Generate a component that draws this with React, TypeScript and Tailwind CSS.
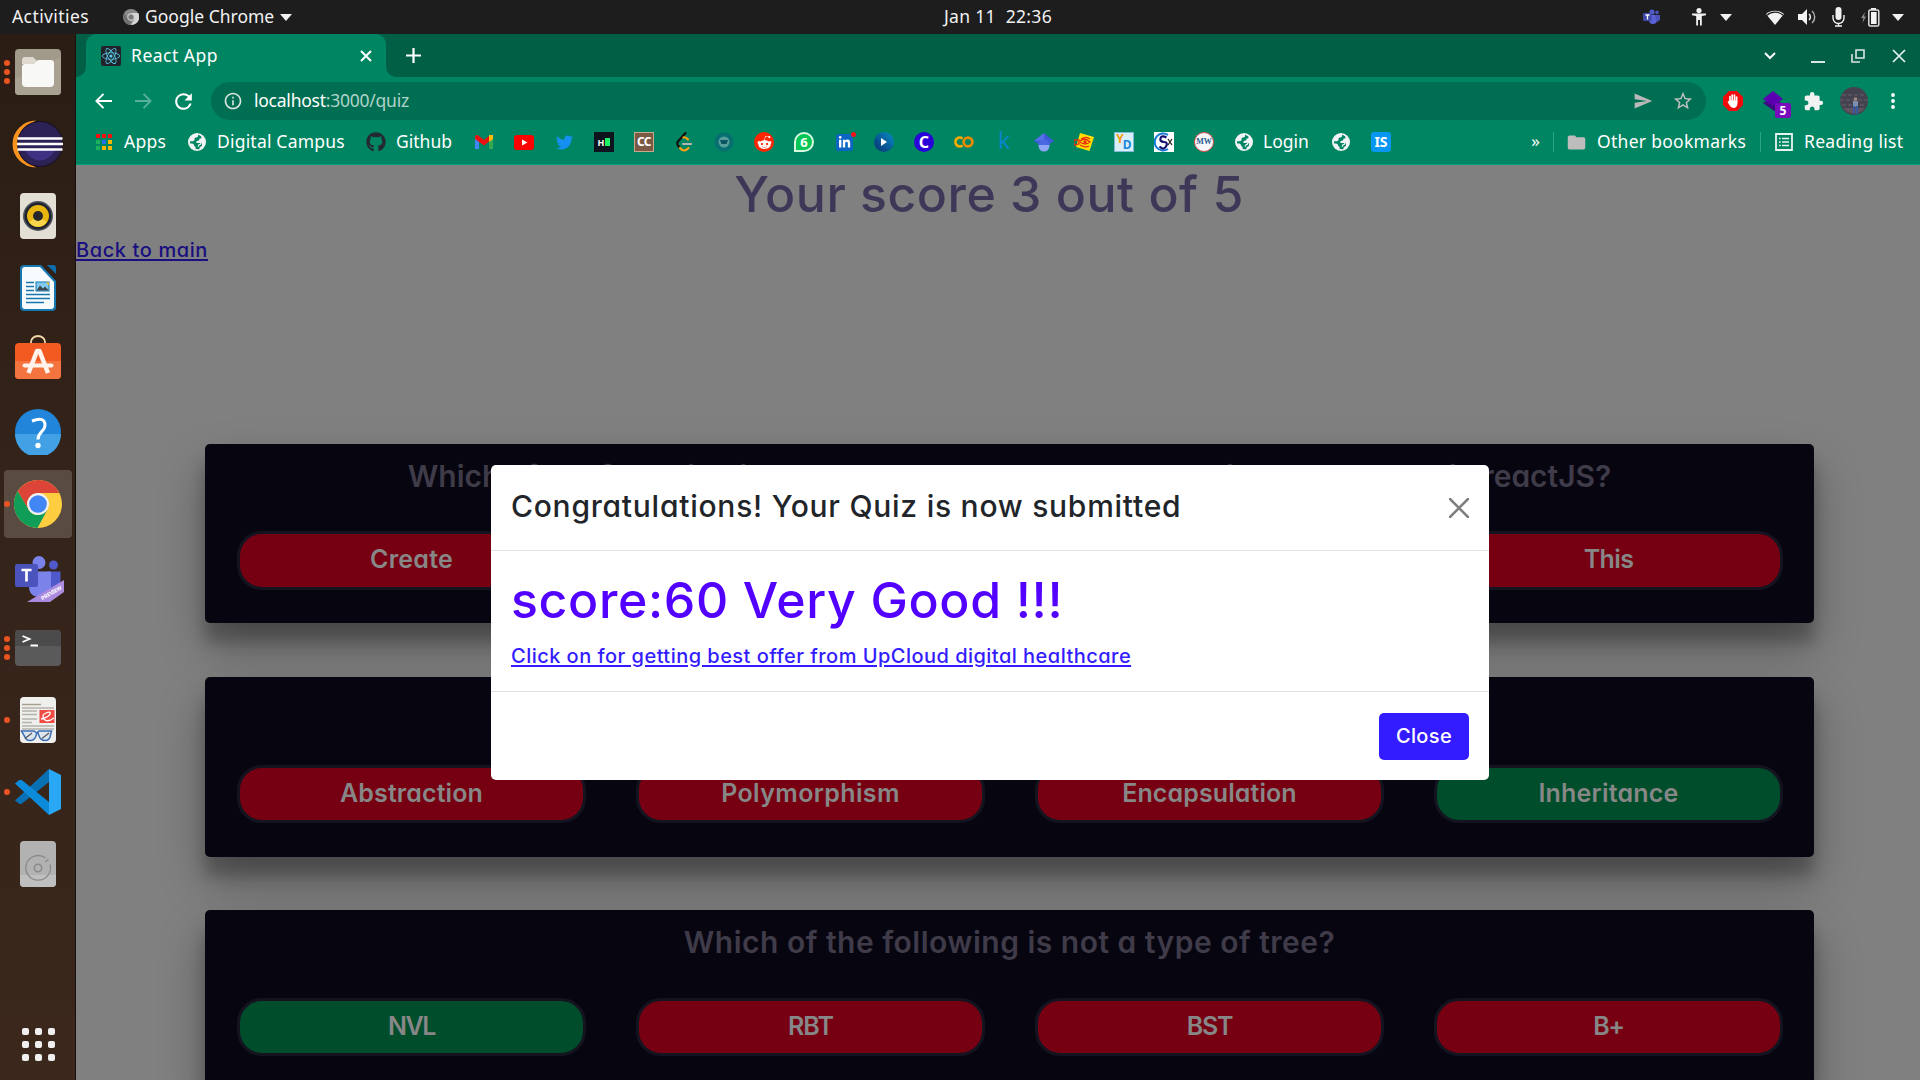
import { FaGithub, FaTwitter, FaRedditAlien, FaReact, FaLinkedinIn } from "react-icons/fa";
import { MdExtension, MdSend, MdStarBorder, MdInfoOutline, MdFolder, MdRefresh } from "react-icons/md";

const ui = "font-['Noto_Sans',sans-serif] whitespace-pre";

/* ---------- Desktop top bar ---------- */

function Caret() {
  return <svg width="12" height="7" viewBox="0 0 12 7"><path d="M0 0h12L6 7z" fill="#f2f2f2" /></svg>;
}

function TeamsTray() {
  return (
    <svg width="17" height="16" viewBox="0 0 17 16">
      <circle cx="9" cy="3" r="2.6" fill="#5059c9" />
      <circle cx="14" cy="3.4" r="1.8" fill="#4b53bc" />
      <path d="M6 6h8v5a4 4 0 0 1-8 0z" fill="#5b62d6" />
      <path d="M12 6h5v4a3 3 0 0 1-4 2.500z" fill="#4b53bc" />
      <rect x="0" y="4" width="8.500" height="8" rx="1" fill="#4048a8" />
      <path d="M2.500 6h4M4.500 6v4.500" stroke="#fff" strokeWidth="1.300" />
    </svg>
  );
}

function TopBar() {
  return (
    <header className={`${ui} relative flex h-[34px] shrink-0 items-center bg-[#1d1d1d] text-[17.5px] leading-none text-[#f2f2f2]`}>
      <span className="ml-[12px] tracking-[0.41px]">Activities</span>
      <svg className="ml-[34px]" width="16" height="16" viewBox="0 0 16 16">
        <circle cx="8" cy="8" r="8" fill="#8a8a8a" />
        <path d="M8 4h7.200A8 8 0 0 1 8 16l3.500-6z" fill="#d5d5d5" />
        <path d="M1.500 4 5 10l3 2-1 4A8 8 0 0 1 1.500 4z" fill="#707070" />
        <circle cx="8" cy="8" r="3.700" fill="#ccc" />
        <circle cx="8" cy="8" r="2.600" fill="#777" />
      </svg>
      <span className="ml-[6px]">Google Chrome</span>
      <span className="ml-[6px]"><Caret /></span>
      <span className="absolute left-[944px] tracking-[0.32px]">Jan 11  22:36</span>
      <div className="ml-auto flex items-center pr-[16px]">
        <TeamsTray />
        <svg className="ml-[31px]" width="16" height="18" viewBox="0 0 16 18" fill="#f2f2f2">
          <circle cx="8" cy="2.600" r="2.600" />
          <path d="M1 5.500h14v1.800l-4.200.700V17.500H9V12H7v5.500H5.200V8L1 7.300z" />
        </svg>
        <span className="ml-[13px]"><Caret /></span>
        <svg className="ml-[33px]" width="20" height="17" viewBox="0 0 20 17">
          <path d="M1 5a14 14 0 0 1 18 0L10 16z" fill="#f2f2f2" />
          <path d="M2 6.200a12 12 0 0 1 16 0" stroke="#1d1d1d" strokeWidth="1.200" fill="none" />
        </svg>
        <svg className="ml-[13px]" width="19" height="18" viewBox="0 0 19 18" fill="none">
          <path d="M0 6h4l5-5v16l-5-5H0z" fill="#f2f2f2" />
          <path d="M11 6a4 4 0 0 1 0 6" stroke="#f2f2f2" strokeWidth="1.500" />
          <path d="M14 3a8 8 0 0 1 0 12" stroke="#aaa" strokeWidth="1.500" />
        </svg>
        <svg className="ml-[15px]" width="13" height="20" viewBox="0 0 13 20" fill="none">
          <rect x="3.500" y="0" width="6" height="13" rx="3" fill="#f2f2f2" />
          <path d="M1 8v3a5.500 5.500 0 0 0 11 0V8M6.500 16v3M3 19h7" stroke="#f2f2f2" strokeWidth="1.400" />
        </svg>
        <svg className="ml-[16px]" width="19" height="19" viewBox="0 0 19 19" fill="none">
          <path d="M4 4 0 10h2.300L1.500 15 5 8.500H3z" fill="#8a8a8a" />
          <path d="M10 0h5v2h-5z" fill="#f2f2f2" />
          <rect x="7.800" y="2" width="10" height="16" rx="1.500" stroke="#ddd" strokeWidth="1.500" />
          <rect x="10" y="4" width="5.600" height="12" fill="#f2f2f2" />
        </svg>
        <span className="ml-[12px]"><Caret /></span>
      </div>
    </header>
  );
}

/* ---------- Dock ---------- */

const FilesIcon = () => (
  <svg width="46" height="46" viewBox="0 0 46 46">
    <rect width="46" height="46" rx="4" fill="#a1998a" />
    <path d="M0 30 46 8v34a4 4 0 0 1-4 4H4a4 4 0 0 1-4-4z" fill="#a9a293" />
    <path d="M7 11q0-3 3-3h8l4 4h14q2 0 2 3H7z" fill="#dedad0" />
    <path d="M7 18q0-3 3-3h9l4-4h13q3 0 3 3v20q0 4-4 4H11q-4 0-4-4z" fill="#f8f8f7" />
  </svg>
);

const EclipseIcon = () => (
  <svg width="52" height="48" viewBox="0 0 52 48">
    <path d="M25 .500a23.500 23.500 0 0 0 0 47A27 27 0 0 1 25 .500z" fill="#f7941e" />
    <circle cx="29" cy="24" r="23" fill="#191026" />
    <circle cx="29" cy="24" r="22" fill="#2c2255" />
    <path d="M14 30h30a16 16 0 0 1-30 0z" fill="#413182" />
    <path d="M6.500 18.500h45M6 24h46M6.500 29.500h45" stroke="#fff" strokeWidth="2.400" />
  </svg>
);

const RhythmboxIcon = () => (
  <svg width="36" height="46" viewBox="0 0 36 46">
    <rect width="36" height="46" rx="4" fill="#e3dfd5" />
    <circle cx="18" cy="23" r="15" fill="#50535c" />
    <circle cx="18" cy="23" r="13.500" fill="#1f2230" />
    <circle cx="18" cy="23" r="11" fill="#e9b50f" />
    <path d="M9 29a11 11 0 0 0 18 0l-9-6z" fill="#f8d54a" />
    <circle cx="18" cy="23" r="5" fill="#26262a" />
  </svg>
);

const WriterIcon = () => (
  <svg width="36" height="46" viewBox="0 0 36 46">
    <path d="M4 0h17l15 16v26a4 4 0 0 1-4 4H4a4 4 0 0 1-4-4V4a4 4 0 0 1 4-4z" fill="#1778b0" />
    <path d="M5 2h15l14 15v24q0 3-3 3H5q-3 0-3-3V5q0-3 3-3z" fill="#f7fbfd" />
    <path d="M27 0h6q3 0 3 3v6z" fill="#0e6cab" />
    <path d="M6 17.500h8M6 21.500h8M6 25.500h8M6 29.500h24M6 33.500h24M6 37.500h18" stroke="#1778b0" strokeWidth="1.500" />
    <rect x="16" y="17" width="13" height="9" fill="#83caf2" stroke="#1778b0" />
    <path d="m16.500 25.500 3.500-5 3 3 2-2 4 4z" fill="#3b4750" />
    <path d="M26 17.500h3v3z" fill="#f5c211" />
  </svg>
);

const SoftwareIcon = () => (
  <svg width="46" height="44" viewBox="0 0 46 44">
    <path d="M16 9V7a7 6 0 0 1 14 0v2" fill="none" stroke="#f0d6a6" strokeWidth="1.800" />
    <rect y="8" width="46" height="36" rx="4" fill="#f25a22" />
    <path d="M0 26h46v14a4 4 0 0 1-4 4H4a4 4 0 0 1-4-4z" fill="#f4743f" />
    <path d="M13.500 38 22 16h2.500L33 38" stroke="#fff3ec" strokeWidth="4.500" fill="none" strokeLinejoin="round" />
    <path d="M9.500 30.500h27" stroke="#fff3ec" strokeWidth="4" strokeLinecap="round" />
  </svg>
);

const HelpIcon = () => (
  <svg width="46" height="46" viewBox="0 0 46 46">
    <circle cx="23" cy="23" r="23" fill="#2186d9" />
    <path d="M0 25h46a23 23 0 0 1-46 0z" fill="#42a0e4" />
    <path d="M17 12q13-5 13 4.500c0 6-7 6-7 14" stroke="#fff" strokeWidth="3" fill="none" />
    <circle cx="23" cy="36.500" r="2.700" fill="#fff" />
  </svg>
);

const ChromeIcon = () => (
  <svg width="48" height="48" viewBox="0 0 48 48">
    <circle cx="24" cy="24" r="24" fill="#ffcd40" />
    <path d="M24 13h21.300A24 24 0 0 0 3.700 11.200L14.500 30z" fill="#db4437" />
    <path d="M3.700 11.200A24 24 0 0 0 23.500 48L33.500 29.500 24 35q-6 0-9.500-5.500z" fill="#0f9d58" />
    <circle cx="24" cy="24" r="11" fill="#f1f1f1" />
    <circle cx="24" cy="24" r="8.800" fill="#4285f4" />
  </svg>
);

const TeamsIcon = () => (
  <svg width="50" height="46" viewBox="0 0 50 46">
    <circle cx="24" cy="6.500" r="6.500" fill="#7b83eb" />
    <circle cx="38.500" cy="9" r="4.500" fill="#5059c9" />
    <path d="M32 15.500h13.500V30q0 8-8 8H32z" fill="#5059c9" />
    <path d="M14 15.500h22V30q0 11-11 11T14 30z" fill="#7b83eb" />
    <rect y="8" width="23" height="23" rx="2" fill="#4b53bc" />
    <path d="M6.500 14h10M11.500 14v11.500" stroke="#fff" strokeWidth="2.700" />
    <path d="M12 46 49 24v12L35 46z" fill="#ab8be0" />
    <text x="27.500" y="44.500" transform="rotate(-31 27.500 44.500)" fontSize="5.500" fontWeight="700" fill="#fff" fontFamily="Noto Sans" textLength="23">PREVIEW</text>
  </svg>
);

const TerminalIcon = () => (
  <svg width="46" height="36" viewBox="0 0 46 36">
    <rect width="46" height="36" rx="4" fill="#5a5a5a" />
    <path d="M0 16V4a4 4 0 0 1 4-4h38a4 4 0 0 1 4 4v12z" fill="#4b4b4b" />
    <path d="m7.500 6 7 3-7 3M15.500 15.500H23" stroke="#fff" strokeWidth="1.800" fill="none" />
  </svg>
);

const ViewerIcon = () => (
  <svg width="36" height="46" viewBox="0 0 36 46">
    <rect width="36" height="46" rx="4" fill="#efefed" />
    <path d="M2 7.500h19" stroke="#a7a08c" strokeWidth="1.500" />
    <path d="M2 11h32M2 14h15M2 17.500h15M2 22h15M2 25.500h10M2 29h32M2 32h32" stroke="#b5b3ac" strokeWidth="1.500" />
    <rect x="19.500" y="13" width="15" height="13" fill="#ef4b43" />
    <path d="M21 22q8-2 9-5t-4-1-2 6 10-1" stroke="#fff" strokeWidth="1.300" fill="none" />
    <path d="M1.500 34H14l2 1.500h1l2-1.500h12.500l-1.500 6q-1 3.500-5 3.500t-5.500-3.500l-1.500-4h-1l-1.500 4q-1.500 3.500-5.500 3.500t-5-3.500z" fill="#dde6ee" stroke="#3c6fb5" strokeWidth="1.500" />
    <path d="m5 41.500 7-5.500M22 41.500l7-5.500" stroke="#55585c" strokeWidth="1.300" />
  </svg>
);

const VsCodeIcon = () => (
  <svg width="46" height="46" viewBox="0 0 46 46">
    <path d="M0 31.500 34 0v13L7 34.500q-1.500 1.200-3 0z" fill="#0a70b4" />
    <path d="M0 14.500 4 11.300q1.500-1 3 0L34 33v13z" fill="#0d8bdb" />
    <path d="m34 0 12 6v34l-12 6z" fill="#2aa8f5" />
  </svg>
);

const DiskIcon = () => (
  <svg width="36" height="46" viewBox="0 0 36 46">
    <rect width="36" height="46" rx="4" fill="#b2b2b2" />
    <path d="M0 34h36v8a4 4 0 0 1-4 4H4a4 4 0 0 1-4-4z" fill="#bfbfbf" />
    <path d="M25.500 17A12.300 12.300 0 1 0 30 23.500M25.500 21l3-3" stroke="#8a8a8a" strokeWidth="1.300" fill="none" />
    <circle cx="18" cy="27" r="3.700" stroke="#8a8a8a" strokeWidth="1.500" fill="none" />
  </svg>
);

const dock = [
  { icon: <FilesIcon />, dots: 3 },
  { icon: <div className="-ml-[2px]"><EclipseIcon /></div>, dots: 0 },
  { icon: <RhythmboxIcon />, dots: 0 },
  { icon: <WriterIcon />, dots: 0 },
  { icon: <div className="-mt-[6px]"><SoftwareIcon /></div>, dots: 0 },
  { icon: <HelpIcon />, dots: 0 },
  { icon: <ChromeIcon />, dots: 1, active: true },
  { icon: <div className="mt-[6px] ml-[4px]"><TeamsIcon /></div>, dots: 0 },
  { icon: <TerminalIcon />, dots: 3 },
  { icon: <ViewerIcon />, dots: 1 },
  { icon: <VsCodeIcon />, dots: 1 },
  { icon: <DiskIcon />, dots: 0 },
];

function Dock() {
  return (
    <aside className="flex w-[76px] shrink-0 flex-col border-r border-[#17100c] bg-linear-to-b from-[#2b1d14] via-[#35241a] to-[#3b271b] pt-[2px]">
      {dock.map((d, i) => (
        <div key={i} className="relative flex h-[72px] items-center justify-center">
          <div className={`ml-px flex h-[68px] w-[68px] items-center justify-center rounded-[4px] ${d.active ? "bg-[#594b42]" : ""}`}>{d.icon}</div>
          <div className="absolute left-[4px] flex flex-col gap-[3px]">
            {Array.from({ length: d.dots }, (_, k) => <i key={k} className="size-[6px] rounded-full bg-[#e95420]" />)}
          </div>
        </div>
      ))}
      <div className="mt-auto mb-[19px] ml-[21.500px] grid w-[33px] grid-cols-3 gap-[6px]">
        {Array.from({ length: 9 }, (_, k) => <i key={k} className="size-[7px] rounded-[2px] bg-[#f0f0f0]" />)}
      </div>
    </aside>
  );
}

/* ---------- Browser chrome ---------- */

function TabStrip() {
  return (
    <div className="flex h-[43px] shrink-0 bg-[#005f45] text-white">
      <div className="flex w-[10px] bg-[#008562]"><div className="flex-1 rounded-br-[10px] bg-[#005f45]" /></div>
      <div className="flex w-[300px] items-center rounded-t-[10px] bg-[#008562] pl-[15px]">
        <span className="flex size-[20px] items-center justify-center rounded-[2px] bg-[#20232a] text-[#5ccfee]"><FaReact size={18} /></span>
        <span className={`${ui} ml-[10px] text-[17.5px] leading-none tracking-[0.5px]`}>React App</span>
        <svg className="ml-auto mr-[14px]" width="12" height="12" viewBox="0 0 12 12"><path d="m1 1 10 10M11 1 1 11" stroke="#fff" strokeWidth="2" /></svg>
      </div>
      <div className="flex flex-1 bg-[#008562]">
        <div className="flex flex-1 items-center rounded-bl-[10px] bg-[#005f45] pr-[14px] pl-[20px]">
          <svg width="15" height="15" viewBox="0 0 15 15"><path d="M7.500 0v15M0 7.500h15" stroke="#fff" strokeWidth="2.200" /></svg>
          <svg className="ml-auto" width="12" height="8" viewBox="0 0 12 8"><path d="m1 1 5 5 5-5" stroke="#fff" strokeWidth="2" fill="none" /></svg>
          <svg className="mt-[12px] ml-[35px]" width="14" height="2" viewBox="0 0 14 2"><path d="M0 1h14" stroke="#d9e7e3" strokeWidth="2" /></svg>
          <svg className="ml-[26px]" width="14" height="14" viewBox="0 0 14 14"><path d="M5 1h8v8H5zM1 5v8h8" stroke="#d9e7e3" strokeWidth="1.600" fill="none" /></svg>
          <svg className="ml-[27px]" width="14" height="14" viewBox="0 0 14 14"><path d="m1 1 12 12M13 1 1 13" stroke="#e8f1ee" strokeWidth="1.700" /></svg>
        </div>
      </div>
    </div>
  );
}

function Toolbar() {
  return (
    <div className="flex h-[48px] shrink-0 items-center bg-[#008562] text-white">
      <svg className="ml-[19px]" width="17" height="16" viewBox="0 0 17 16" fill="none" stroke="#fff" strokeWidth="1.900"><path d="M17 8H1.500M8.500.800 1.400 8l7.100 7.200" /></svg>
      <svg className="ml-[23px]" width="17" height="16" viewBox="0 0 17 16" fill="none" stroke="#59b09a" strokeWidth="1.900"><path d="M0 8h15.500M8.500.800 15.600 8l-7.100 7.200" /></svg>
      <span className="ml-[19px]"><MdRefresh size={25} /></span>
      <div className="ml-[15px] flex h-[38px] w-[1495px] items-center rounded-full bg-[#006e52] pr-[12px] pl-[12px]">
        <span className="text-[#d5e5e0]"><MdInfoOutline size={20} /></span>
        <span className={`${ui} ml-[11px] text-[17.5px] leading-none tracking-[-0.24px] text-white`}>localhost<span className="text-[#b0d3c9]">:3000/quiz</span></span>
        <span className="ml-auto text-[#b9b9b9]"><MdSend size={20} /></span>
        <span className="ml-[19px] text-[#c0c0c0]"><MdStarBorder size={22} /></span>
      </div>
      <svg className="ml-[17px]" width="20" height="20" viewBox="0 0 20 20">
        <path d="M6 0h8l6 6v8l-6 6H6l-6-6V6z" fill="#f30b0b" />
        <path d="M7 11V5.500M9.200 10V4M11.500 10V4.200M13.600 11V6" stroke="#fff" strokeWidth="1.700" strokeLinecap="round" />
        <path d="M6.200 9.500h8.200V13q-.500 4-4 4-2.500 0-4-3L4.500 11z" fill="#fff" />
      </svg>
      <div className="relative ml-[20px] h-[28px] w-[28px]">
        <svg className="mt-[4px]" width="20" height="20" viewBox="0 0 20 20"><path d="m0 12 10-6 10 7-9 7z" fill="#3a0a80" /><path d="m0 8 10-8 10 8-10 7z" fill="#5b00b0" /></svg>
        <span className={`${ui} absolute top-[16px] left-[12px] flex h-[15px] w-[16px] items-center justify-center rounded-[2px] bg-[#7a0bbd] text-[12px] leading-none font-bold`}>5</span>
      </div>
      <span className="ml-[12px]"><MdExtension size={21} color="#f2f2f2" /></span>
      <svg className="ml-[16px]" width="28" height="28" viewBox="0 0 28 28">
        <circle cx="14" cy="14" r="14" fill="#45424f" />
        <path d="M2 8h24M0 13h28M2 18h24" stroke="#595664" strokeWidth="1.500" strokeDasharray="4 2" />
        <path d="M3 21h22a14 14 0 0 1-22 0z" fill="#5f5560" />
        <circle cx="15.500" cy="12" r="1.800" fill="#a58a80" />
        <path d="M13 14h5v6h-5z" fill="#7b8fae" /><path d="M14 19v8M17 19v8" stroke="#3659a0" strokeWidth="2" />
      </svg>
      <svg className="ml-[23px]" width="4" height="16" viewBox="0 0 4 16" fill="#fff"><circle cx="2" cy="2" r="1.900" /><circle cx="2" cy="8" r="1.900" /><circle cx="2" cy="14" r="1.900" /></svg>
    </div>
  );
}

const Globe = () => (
  <svg width="18" height="18" viewBox="0 0 18 18">
    <circle cx="9" cy="9" r="9" fill="#f1f3f4" />
    <path d="M10 1.800c.5 1.800-.4 2.800-1.800 2.800-1.500 0-1.700.9-1.700 1.900 0 1.200-.6 1.700-2 1.700H2c0 .9 0 1.600.2 2.300 1 0 2.300-.1 3.100.6.900.7.600 1.600 1.300 2.200.6.500 1 .6 1 1.300v1.500c2 .4 3.900-.2 3.900-.2-.1-1.300.2-2 1-2.200 1-.300 1.500-.8 1.500-1.900 0-1.400-.8-2.200-2.300-2.200H9.500c-.7 0-1-.3-1-.9s.6-.9 1.500-.9c1 0 1.300-.6 1.300-1.200 0-.7.300-1 1-1 .9 0 1.300-.7 1.200-1.900A8 8 0 0 0 10 1.800z" fill="#008562" />
    <path d="M8.500 9.500h2.800c1 0 1.400.7 1.400 1.200s-.6.9-1.300 1c-1 .2-1.100 1-1.200 2" stroke="#f1f3f4" strokeWidth="1.200" fill="none" />
  </svg>
);

const tile = "flex size-[20px] shrink-0 items-center justify-center font-['Noto_Sans',sans-serif] font-bold leading-none text-white";

const favicons = [
  <svg width="18" height="14" viewBox="0 0 18 14"><path d="M0 2v12h4V5z" fill="#4285f4" /><path d="M18 2v12h-4V5z" fill="#34a853" /><path d="M14 0h4v4l-4 3z" fill="#fbbc04" /><path d="M0 3q0-4 3.500-2.500L9 5l5-4v5.500L9 10.500 0 4z" fill="#ea1010" /></svg>,
  <svg width="20" height="15" viewBox="0 0 20 15"><rect width="20" height="15" rx="3" fill="#f00" /><path d="m8 4.500 5.500 3-5.500 3z" fill="#fff" /></svg>,
  <FaTwitter size={17} color="#1590f2" />,
  <div className={`${tile} gap-[1px] bg-[#0e141e] text-[9px]`}>H<i className="h-[8px] w-[5px] bg-[#1bf268]" /></div>,
  <div className={`${tile} border border-[#c9a98c] bg-[#7a5a44] text-[12px] tracking-[-0.5px]`}>CC</div>,
  <svg width="16" height="20" viewBox="0 0 16 20" fill="none" strokeLinecap="round"><path d="M9.500 1 2 9.500q-1.500 2 0 4l2 2.500" stroke="#14110c" strokeWidth="2.200" /><path d="M4 16q4 5 8.500 0M7.500 5.500q2-1 4.500 2" stroke="#ffa116" strokeWidth="2.200" /><path d="M7 12h8.500" stroke="#b3b3b3" strokeWidth="2" /></svg>,
  <svg width="20" height="20" viewBox="0 0 20 20"><circle cx="10" cy="10" r="9.500" fill="#086f70" /><circle cx="10" cy="10" r="5.500" fill="#569f9c" /><path d="M6 8h8l-1.500 4h-5z" fill="#0c5560" /></svg>,
  <div className={`${tile} rounded-full bg-[#ff2500]`}><FaRedditAlien size={15} /></div>,
  <div className={`${tile} rounded-full rounded-bl-none border-2 border-[#d8f8e2] bg-[#06c755] text-[13px]`}>6</div>,
  <div className="relative"><div className="flex size-[17px] items-center justify-center rounded-[2px] bg-[#0a66c2] text-white"><FaLinkedinIn size={13} /></div><i className="absolute -top-[2px] -right-[3px] size-[5px] rounded-full bg-[#f5121d]" /></div>,
  <div className={`${tile} rounded-full bg-linear-to-tr from-[#08306e] to-[#0b8fc9]`}><svg width="6" height="8" viewBox="0 0 6 8"><path d="m0 0 6 4-6 4z" fill="#fff" /></svg></div>,
  <div className={`${tile} rounded-full bg-[#2a00d8] text-[16px]`}>C</div>,
  <svg width="20" height="12" viewBox="0 0 20 12" fill="none" strokeWidth="2.700"><path d="M8.500 2.500a4.400 4.400 0 1 0 0 7" stroke="#f9ab00" /><circle cx="14" cy="6" r="4.400" stroke="#f28a00" /></svg>,
  <span className="-mt-[3px] font-['Open_Sans',sans-serif] text-[23px] leading-none text-[#0b86cf]">k</span>,
  <svg width="20" height="19" viewBox="0 0 20 19"><path d="M10 0 0 8l4.500 3h11L20 8z" fill="#3c5bd8" /><path d="m0 8 10-8v7z" fill="#5473ea" /><circle cx="10" cy="13" r="5.500" fill="#8fa5f8" /><path d="M4.500 12a5.500 5.500 0 0 1 11 0z" fill="#4a68e0" /></svg>,
  <svg width="20" height="20" viewBox="0 0 20 20"><path d="m6 1 14 4-4.500 14L2 15z" fill="#ffdd00" /><path d="M0 8v5l5-1V8zM6 9q5-4 10 1-5 4-10 0M7 7q5-3 9 0M6 13q5 3 9 1" stroke="#e8300c" strokeWidth="1.300" fill="none" /><circle cx="11" cy="10" r="1.700" fill="#e8300c" /></svg>,
  <div className={`${tile} border border-[#7fb8d8] bg-[#d8effa] text-[12px]`}><span className="-mt-[6px] text-[#f49a0a]">Y</span><span className="mt-[5px] -ml-px text-[#1c86d8]">D</span></div>,
  <div className={`${tile} bg-white`}><svg width="20" height="20" viewBox="0 0 20 20" fill="none"><path d="M14 3a8.500 8.500 0 1 0 0 14" stroke="#147bd6" strokeWidth="2" /><path d="M12.500 5.500q-5-2.500-6 .800T10 10t2 4.500-6.500 0" stroke="#15106e" strokeWidth="2.200" /><path d="m14 7 4 6M18 7l-4 6" stroke="#2b2020" strokeWidth="1.300" /></svg></div>,
  <div className="flex size-[20px] items-center justify-center rounded-full border border-[#d85050] bg-[#f4f6f8] font-['Liberation_Serif',serif] text-[8px] font-bold text-[#285a8c]">MW</div>,
];

function Bookmarks() {
  const appColors = ["bg-[#f01010]", "bg-[#f01010]", "bg-[#f01010]", "bg-[#18b35c]", "bg-[#1a73e8]", "bg-[#f5b400]", "bg-[#18b35c]", "bg-[#f5b400]", "bg-[#f5b400]"];
  return (
    <div className={`${ui} flex h-[40px] shrink-0 items-center border-b border-[#00a17c] bg-[#008562] pb-[5px] text-[17.5px] leading-none text-white`}>
      <div className="ml-[20px] grid grid-cols-3 gap-[2px]">
        {appColors.map((c, i) => <i key={i} className={`size-[4px] ${c}`} />)}
      </div>
      <span className="ml-[12px] w-[42px] tracking-[0.3px]">Apps</span>
      <span className="ml-[22px]"><Globe /></span>
      <span className="ml-[11px] w-[128px] tracking-[0.2px]">Digital Campus</span>
      <span className="ml-[21px]"><FaGithub size={20} color="#24292f" /></span>
      <span className="ml-[10px] w-[56px]">Github</span>
      <div className="ml-[22px] flex">
        {favicons.map((f, i) => <div key={i} className="mr-[20px] flex h-[20px] w-[20px] shrink-0 items-center justify-center">{f}</div>)}
      </div>
      <span className="ml-[1px]"><Globe /></span>
      <span className="ml-[10px] w-[46px]">Login</span>
      <span className="ml-[23px]"><Globe /></span>
      <div className={`${tile} ml-[21px] rounded-[3px] bg-[#0796f0] text-[14px]`}>IS</div>
      <span className="-mt-[3px] ml-auto text-[17px]">»</span>
      <i className="ml-[13px] h-[20px] w-px bg-[#2aa586]" />
      <span className="ml-[12px] text-[#bdbdbd]"><MdFolder size={21} /></span>
      <span className="ml-[10px] w-[149px] tracking-[0.28px]">Other bookmarks</span>
      <i className="ml-[14px] h-[20px] w-px bg-[#2aa586]" />
      <svg className="ml-[14px]" width="18" height="18" viewBox="0 0 18 18" fill="none" stroke="#e8f3f0"><path d="M1 1h16v16H1z" strokeWidth="1.800" /><path d="M7 5.500h7M7 9h7M7 12.500h7M4 5.500h1.700M4 9h1.700M4 12.500h1.700" strokeWidth="1.500" /></svg>
      <span className="mr-[17px] ml-[11px] w-[99px] tracking-[0.3px]">Reading list</span>
    </div>
  );
}

/* ---------- Quiz page ---------- */

type Answer = { text: string; track: string; good?: boolean };
const cards: { q: string; track: string; answers: Answer[] }[] = [
  {
    q: "Which of the following is the command to create a new single page app in reactJS?",
    track: "tracking-[-0.03px]",
    answers: [
      { text: "Create", track: "tracking-[0.24px]" },
      { text: "Props", track: "" },
      { text: "State", track: "" },
      { text: "This", track: "tracking-[-0.6px]" },
    ],
  },
  {
    q: "",
    track: "",
    answers: [
      { text: "Abstraction", track: "tracking-[0.1px]" },
      { text: "Polymorphism", track: "tracking-[0.36px]" },
      { text: "Encapsulation", track: "tracking-[0.1px]" },
      { text: "Inheritance", track: "tracking-[0.2px]", good: true },
    ],
  },
  {
    q: "Which of the following is not a type of tree?",
    track: "tracking-[0.49px]",
    answers: [
      { text: "NVL", track: "tracking-[-1.5px]", good: true },
      { text: "RBT", track: "tracking-[-1px]" },
      { text: "BST", track: "tracking-[-1.3px]" },
      { text: "B+", track: "tracking-[-1.5px]" },
    ],
  },
];

function QuizPage() {
  return (
    <main className="flex flex-1 flex-col overflow-hidden bg-[#808080]">
      <h1 className="-mt-px w-[1826px] text-center text-[50px] leading-[60px] font-medium tracking-[0.5px] text-[#3f3758]">Your score 3 out of 5</h1>
      <a className="mt-[11px] text-[20px] leading-[30px] font-medium tracking-[0.6px] text-[#1a0f80] underline decoration-[1.500px] underline-offset-[2px]">Back to main</a>
      <div className="mt-[178.600px] ml-[129px] flex w-[1609px] flex-col gap-[53.400px]">
        {cards.map((c, i) => (
          <section key={i} className="h-[179.800px] shrink-0 rounded-[5px] bg-[#070510] shadow-[0_24px_47px_rgba(0,0,0,0.3),0_19px_15px_rgba(0,0,0,0.22)]">
            <h2 className={`h-[87.800px] text-center text-[30px] leading-[65px] font-semibold whitespace-nowrap text-[#3f3b49] ${c.track}`}>{c.q}</h2>
            <div className="ml-[32px] grid grid-cols-[349px_349px_349px_349px] gap-[50px]">
              {c.answers.map((a) => (
                <div key={a.text} className={`h-[58.400px] rounded-[25px] border-[3px] border-[#141420] text-center text-[25px] leading-[50px] font-semibold text-[#878787] ${a.track} ${a.good ? "bg-[#004d2c]" : "bg-[#760012]"}`}>{a.text}</div>
              ))}
            </div>
          </section>
        ))}
      </div>
    </main>
  );
}

function Modal() {
  return (
    <div className="absolute top-[465px] left-[491px] flex h-[315px] w-[998px] flex-col rounded-[5px] bg-white font-[Inter,sans-serif] text-[#212529] [font-feature-settings:'cv11']">
      <div className="flex h-[86px] shrink-0 items-center justify-between border-b border-[#dee2e6] px-[20px]">
        <h4 className="-mt-[2px] text-[30px] leading-[45px] font-medium tracking-[0.75px] whitespace-nowrap">Congratulations! Your Quiz is now submitted</h4>
        <svg width="20" height="20" viewBox="0 0 20 20"><path d="m1 1 18 18M19 1 1 19" stroke="#7f7f7f" strokeWidth="2.500" strokeLinecap="round" /></svg>
      </div>
      <div className="h-[141px] shrink-0 border-b border-[#dee2e6] px-[20px] pt-[19px]">
        <div className="text-[50px] leading-[60px] font-medium tracking-[0.65px] text-[#5200ff]">score:60 Very Good !!!</div>
        <a className="mt-[11px] block text-[20px] leading-[30px] font-medium tracking-[0.47px] text-[#331cff] underline decoration-[1.500px] underline-offset-[2px]">Click on for getting best offer from UpCloud digital healthcare</a>
      </div>
      <div className="flex flex-1 items-center justify-end px-[20px]">
        <button className="h-[47px] w-[90px] rounded-[5px] bg-[#331cff] text-[20px] font-medium tracking-[0.34px] text-white">Close</button>
      </div>
    </div>
  );
}

export default function App() {
  return (
    <div className="relative flex h-[1080px] w-[1920px] flex-col overflow-hidden">
      <TopBar />
      <div className="flex min-h-0 flex-1">
        <Dock />
        <div className="flex min-w-0 flex-1 flex-col font-[Inter,sans-serif] [font-feature-settings:'cv11']">
          <TabStrip />
          <Toolbar />
          <Bookmarks />
          <QuizPage />
        </div>
      </div>
      <Modal />
    </div>
  );
}
